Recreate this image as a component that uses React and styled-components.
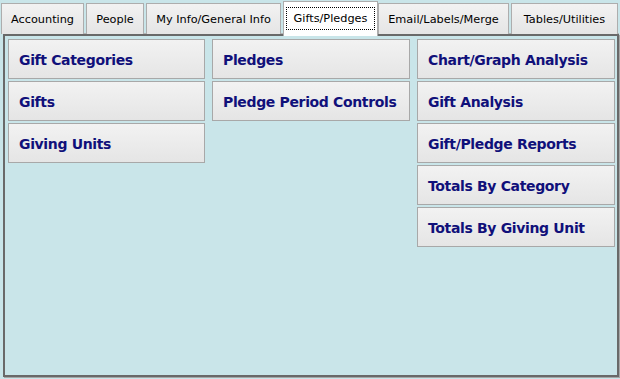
import React from "react";
import styled, { createGlobalStyle } from "styled-components";

const GlobalStyle = createGlobalStyle`
  html, body {
    margin: 0;
    padding: 0;
    background: #c9e5e9;
  }
  * {
    box-sizing: border-box;
  }
`;

const Window = styled.div`
  width: 620px;
  height: 379px;
  background: #c9e5e9;
  display: flex;
  flex-direction: column;
  font-family: "DejaVu Sans", Verdana, sans-serif;
  overflow: hidden;
`;

const TabBar = styled.div`
  display: flex;
  align-items: flex-end;
  gap: 2px;
  padding-left: 1px;
  height: 34px;
  position: relative;
  z-index: 2;
`;

const Tab = styled.div`
  width: ${(p) => p.$w}px;
  height: ${(p) => (p.$active ? 35 : 31)}px;
  margin-bottom: ${(p) => (p.$active ? -2 : 0)}px;
  margin-right: ${(p) => (p.$active ? -2 : 0)}px;
  border: 1px solid #adadad;
  border-bottom: none;
  background: ${(p) =>
    p.$active ? "#ffffff" : "linear-gradient(#f2f2f2, #e5e5e5)"};
  display: flex;
  align-items: flex-start;
  justify-content: center;
  padding: ${(p) => (p.$active ? "5px 2px 0" : "9px 0 0")};
  font-size: 11.3px;
  color: #000;
  white-space: nowrap;
`;

const Focus = styled.span`
  flex: 1;
  height: 23px;
  border: 1px dotted #000;
  display: flex;
  align-items: center;
  justify-content: center;
  padding-bottom: 1px;
`;

const Panel = styled.div`
  margin: 0 1px 2px 3px;
  flex: 1;
  border: 2px solid #696969;
  box-shadow: 1px 1px 0 #a6a6a6, 0 -1px 0 #b4b4b4;
  background: #c9e5e9;
  display: grid;
  grid-template-columns: 197px 198px 198px;
  column-gap: 7px;
  align-items: start;
  padding: 3px 0 0 3px;
`;

const Column = styled.div`
  display: flex;
  flex-direction: column;
  gap: 2px;
`;

const NavButton = styled.div`
  height: 40px;
  border: 1px solid #a8a8a8;
  background: linear-gradient(#f2f2f2, #e5e5e5);
  display: flex;
  align-items: center;
  padding: 1px 0 0 10px;
  font-size: 14px;
  font-weight: bold;
  letter-spacing: -0.35px;
  color: #10107a;
  white-space: nowrap;
`;

const tabs = [
  { label: "Accounting", w: 83 },
  { label: "People", w: 58 },
  { label: "My Info/General Info", w: 135 },
  { label: "Gifts/Pledges", w: 95, active: true },
  { label: "Email/Labels/Merge", w: 131 },
  { label: "Tables/Utilities", w: 107 },
];

const columns = [
  ["Gift Categories", "Gifts", "Giving Units"],
  ["Pledges", "Pledge Period Controls"],
  [
    "Chart/Graph Analysis",
    "Gift Analysis",
    "Gift/Pledge Reports",
    "Totals By Category",
    "Totals By Giving Unit",
  ],
];

export default function App() {
  return (
    <Window>
      <GlobalStyle />
      <TabBar>
        {tabs.map((t) => (
          <Tab key={t.label} $w={t.w} $active={t.active}>
            {t.active ? <Focus>{t.label}</Focus> : t.label}
          </Tab>
        ))}
      </TabBar>
      <Panel>
        {columns.map((col, i) => (
          <Column key={i}>
            {col.map((label) => (
              <NavButton key={label}>{label}</NavButton>
            ))}
          </Column>
        ))}
      </Panel>
    </Window>
  );
}
